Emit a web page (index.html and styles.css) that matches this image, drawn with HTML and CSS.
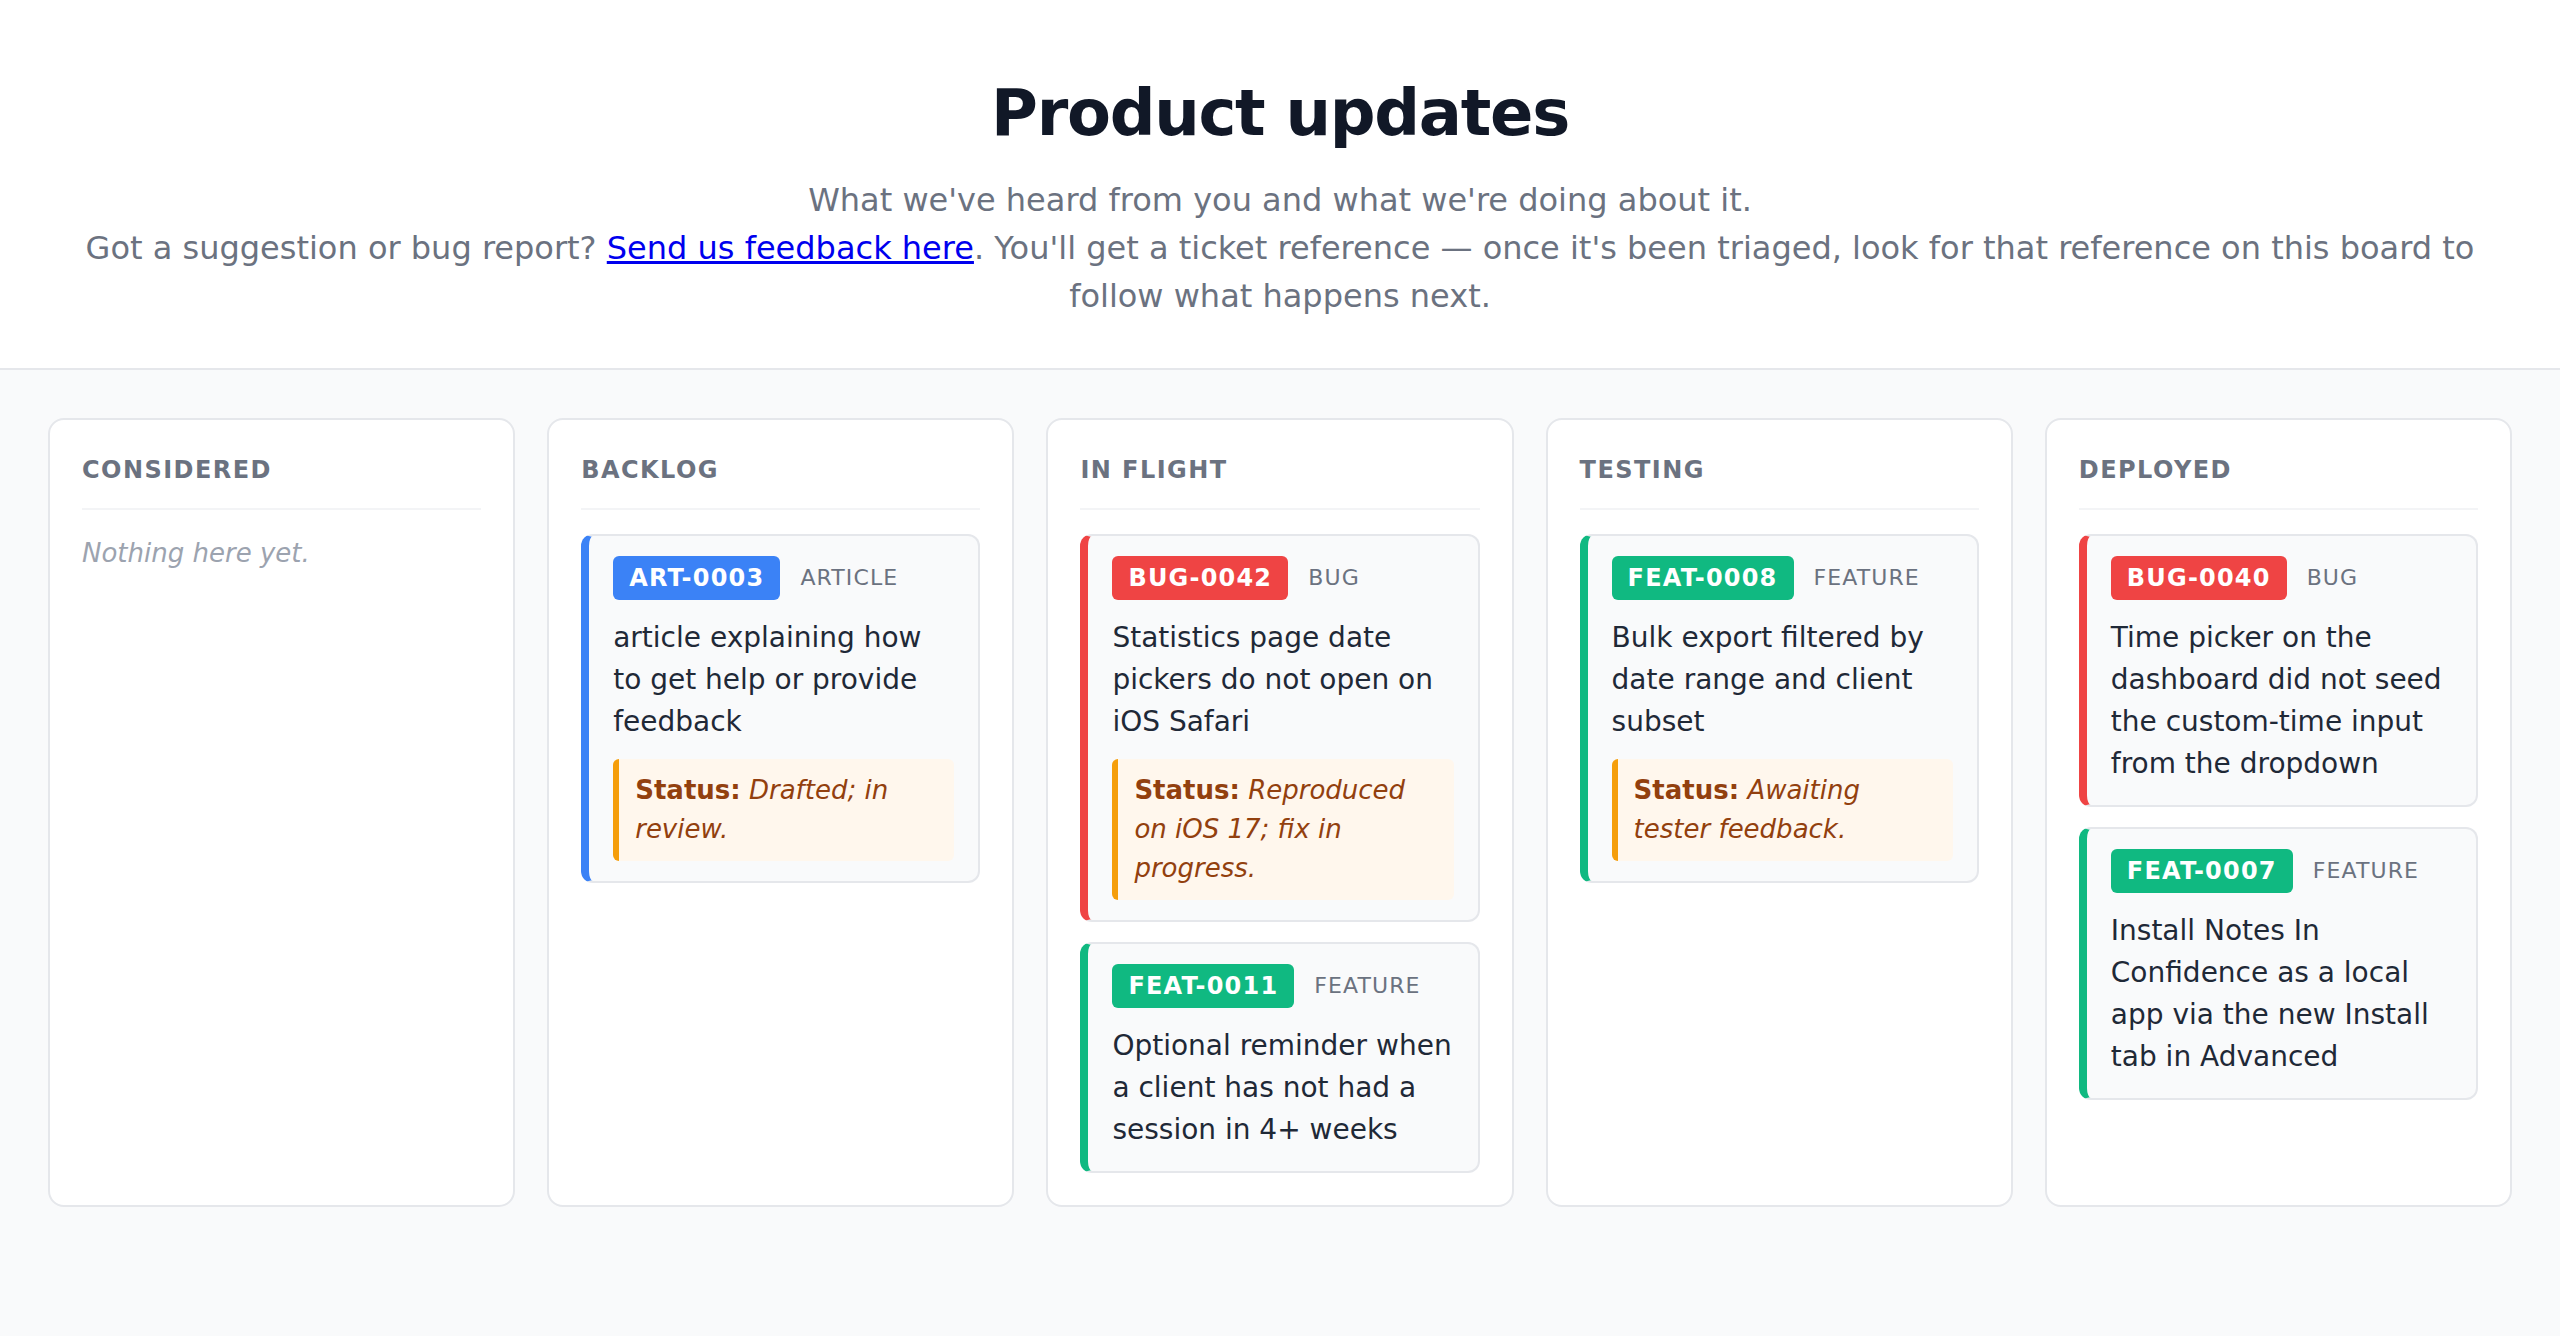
FILE: index.html
```html
<!DOCTYPE html>
<html lang="en">

<head>
    <meta charset="UTF-8">
    <meta name="viewport" content="width=device-width, initial-scale=1.0">
    <title>Product updates</title>
    <link rel="stylesheet" href="styles.css">
</head>

<body>
    <header class="intro">
        <h1>Product updates</h1>
        <p>What we've heard from you and what we're doing about it.<br>
            Got a suggestion or bug report? <a href="#">Send us feedback here</a>. You'll get a ticket reference — once it's been triaged, look for that reference on this board to follow what happens next.</p>
    </header>

    <main class="board">
        <section class="column">
            <h2 class="column-title">Considered</h2>
            <p class="empty">Nothing here yet.</p>
        </section>

        <section class="column">
            <h2 class="column-title">Backlog</h2>
            <div class="card card-article">
                <div class="card-meta"><span class="ticket ticket-article">ART-0003</span><span class="kind">Article</span></div>
                <p class="card-text">article explaining how to get help or provide feedback</p>
                <p class="status"><strong>Status:</strong> <em>Drafted; in review.</em></p>
            </div>
        </section>

        <section class="column">
            <h2 class="column-title">In flight</h2>
            <div class="card card-bug">
                <div class="card-meta"><span class="ticket ticket-bug">BUG-0042</span><span class="kind">Bug</span></div>
                <p class="card-text">Statistics page date pickers do not open on iOS Safari</p>
                <p class="status"><strong>Status:</strong> <em>Reproduced on iOS 17; fix in progress.</em></p>
            </div>
            <div class="card card-feature">
                <div class="card-meta"><span class="ticket ticket-feature">FEAT-0011</span><span class="kind">Feature</span></div>
                <p class="card-text">Optional reminder when a client has not had a session in 4+ weeks</p>
            </div>
        </section>

        <section class="column">
            <h2 class="column-title">Testing</h2>
            <div class="card card-feature">
                <div class="card-meta"><span class="ticket ticket-feature">FEAT-0008</span><span class="kind">Feature</span></div>
                <p class="card-text">Bulk export filtered by date range and client subset</p>
                <p class="status"><strong>Status:</strong> <em>Awaiting tester feedback.</em></p>
            </div>
        </section>

        <section class="column">
            <h2 class="column-title">Deployed</h2>
            <div class="card card-bug">
                <div class="card-meta"><span class="ticket ticket-bug">BUG-0040</span><span class="kind">Bug</span></div>
                <p class="card-text">Time picker on the dashboard did not seed the custom-time input from the dropdown</p>
            </div>
            <div class="card card-feature">
                <div class="card-meta"><span class="ticket ticket-feature">FEAT-0007</span><span class="kind">Feature</span></div>
                <p class="card-text">Install Notes In Confidence as a local app via the new Install tab in Advanced</p>
            </div>
        </section>
    </main>
</body>

</html>
```

FILE: styles.css
```css
* {
    box-sizing: border-box;
    padding: 0;
    margin: 0;
}

body {
    min-height: 100vh;
    background-color: #f9fafb;
    font-family: "DejaVu Sans", "Noto Sans", sans-serif;
    color: #1f2937;
}

/* page heading */
.intro {
    padding: 75px 48px 48px;
    background-color: #fff;
    border-bottom: 2px solid #e5e7eb;
    text-align: center;
}

.intro h1 {
    margin-bottom: 24px;
    font-size: 64px;
    line-height: 1.2;
    letter-spacing: -0.02em;
    color: #111827;
}

.intro p {
    font-size: 32px;
    line-height: 1.5;
    color: #6b7280;
}

.intro a {
    color: #0000ee;
}

/* board */
.board {
    display: grid;
    grid-template-columns: repeat(5, 1fr);
    gap: 32px;
    padding: 48px;
}

.column {
    padding: 32px;
    background-color: #fff;
    border: 2px solid #e5e7eb;
    border-radius: 16px;
}

.column-title {
    margin-bottom: 24px;
    padding-bottom: 20px;
    border-bottom: 2px solid #f3f4f6;
    font-size: 24px;
    line-height: 1.5;
    font-weight: bold;
    text-transform: uppercase;
    letter-spacing: 0.06em;
    color: #6b7280;
}

.empty {
    font-size: 26px;
    line-height: 1.5;
    font-style: italic;
    color: #9ca3af;
}

/* cards */
.card {
    margin-bottom: 20px;
    padding: 20px 24px;
    background-color: #f9fafb;
    border: 2px solid #e5e7eb;
    border-left: 8px solid #e5e7eb;
    border-radius: 12px;
}

.card:last-child {
    margin-bottom: 0;
}

.card-article {
    border-left-color: #3b82f6;
}

.card-bug {
    border-left-color: #ef4444;
}

.card-feature {
    border-left-color: #10b981;
}

.card-meta {
    display: flex;
    align-items: center;
    gap: 20px;
    margin-bottom: 17px;
}

.ticket {
    padding: 8px 16px;
    border-radius: 6px;
    font-size: 24px;
    line-height: 28px;
    font-weight: bold;
    letter-spacing: 0.05em;
    color: #fff;
}

.ticket-article {
    background-color: #3b82f6;
}

.ticket-bug {
    background-color: #ef4444;
}

.ticket-feature {
    background-color: #10b981;
}

.kind {
    font-size: 22px;
    text-transform: uppercase;
    letter-spacing: 0.05em;
    color: #6b7280;
}

.card-text {
    font-size: 28px;
    line-height: 1.5;
    color: #1f2937;
}

.status {
    margin-top: 16px;
    padding: 12px 16px;
    background-color: #fff7ed;
    border-left: 6px solid #f59e0b;
    border-radius: 6px;
    font-size: 26px;
    line-height: 1.5;
    color: #92400e;
}
```
